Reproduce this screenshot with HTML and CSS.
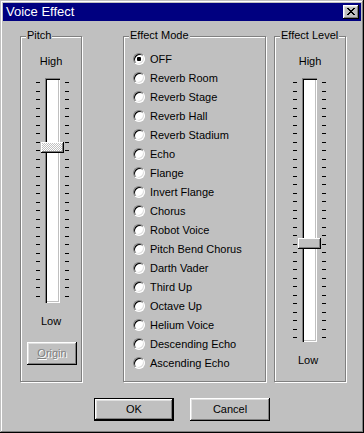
FILE: index.html
```html
<!DOCTYPE html>
<html>
<head>
<meta charset="utf-8">
<title>Voice Effect</title>
<link rel="stylesheet" href="styles.css">
</head>
<body>
<div class="window">
  <div class="titlebar">
    <span class="title">Voice Effect</span>
    <span class="close">
      <svg width="8" height="7" viewBox="0 0 8 7" shape-rendering="crispEdges">
        <rect x="0" y="0" width="2" height="1" fill="#000"/>
        <rect x="6" y="0" width="2" height="1" fill="#000"/>
        <rect x="1" y="1" width="2" height="1" fill="#000"/>
        <rect x="5" y="1" width="2" height="1" fill="#000"/>
        <rect x="2" y="2" width="4" height="1" fill="#000"/>
        <rect x="3" y="3" width="2" height="1" fill="#000"/>
        <rect x="2" y="4" width="4" height="1" fill="#000"/>
        <rect x="1" y="5" width="2" height="1" fill="#000"/>
        <rect x="5" y="5" width="2" height="1" fill="#000"/>
        <rect x="0" y="6" width="2" height="1" fill="#000"/>
        <rect x="6" y="6" width="2" height="1" fill="#000"/>
      </svg>
    </span>
  </div>
  <div class="content">
    <div class="groups">
      <div class="group pitch">
        <span class="legend">Pitch</span>
        <div class="lbl high">High</div>
        <div class="slider">
          <div class="ticks"><i></i><i></i><i></i><i></i><i></i><i></i><i></i><i></i><i></i><i></i><i></i><i></i><i></i><i></i><i></i><i></i><i></i><i></i><i></i><i></i><i></i><i></i><i></i><i></i><i></i><i></i></div>
          <div class="track"><span class="thumb dither" style="top:64px"></span></div>
          <div class="ticks"><i></i><i></i><i></i><i></i><i></i><i></i><i></i><i></i><i></i><i></i><i></i><i></i><i></i><i></i><i></i><i></i><i></i><i></i><i></i><i></i><i></i><i></i><i></i><i></i><i></i><i></i></div>
        </div>
        <div class="lbl low">Low</div>
        <button class="btn origin" disabled><u>O</u>rigin</button>
      </div>
      <div class="group mode">
        <span class="legend">Effect Mode</span>
        <ul class="radios">
          <li class="checked"><span class="radio"></span>OFF</li>
          <li><span class="radio"></span>Reverb Room</li>
          <li><span class="radio"></span>Reverb Stage</li>
          <li><span class="radio"></span>Reverb Hall</li>
          <li><span class="radio"></span>Reverb Stadium</li>
          <li><span class="radio"></span>Echo</li>
          <li><span class="radio"></span>Flange</li>
          <li><span class="radio"></span>Invert Flange</li>
          <li><span class="radio"></span>Chorus</li>
          <li><span class="radio"></span>Robot Voice</li>
          <li><span class="radio"></span>Pitch Bend Chorus</li>
          <li><span class="radio"></span>Darth Vader</li>
          <li><span class="radio"></span>Third Up</li>
          <li><span class="radio"></span>Octave Up</li>
          <li><span class="radio"></span>Helium Voice</li>
          <li><span class="radio"></span>Descending Echo</li>
          <li><span class="radio"></span>Ascending Echo</li>
        </ul>
      </div>
      <div class="group level">
        <span class="legend">Effect Level</span>
        <div class="lbl high">High</div>
        <div class="slider">
          <div class="ticks"><i></i><i></i><i></i><i></i><i></i><i></i><i></i><i></i><i></i><i></i><i></i><i></i><i></i><i></i><i></i><i></i><i></i><i></i><i></i><i></i><i></i><i></i><i></i><i></i><i></i><i></i><i></i><i></i><i></i><i></i><i></i></div>
          <div class="track"><span class="thumb" style="top:160px"></span></div>
          <div class="ticks"><i></i><i></i><i></i><i></i><i></i><i></i><i></i><i></i><i></i><i></i><i></i><i></i><i></i><i></i><i></i><i></i><i></i><i></i><i></i><i></i><i></i><i></i><i></i><i></i><i></i><i></i><i></i><i></i><i></i><i></i><i></i></div>
        </div>
        <div class="lbl low">Low</div>
      </div>
    </div>
    <div class="buttons">
      <button class="btn default">OK</button>
      <button class="btn">Cancel</button>
    </div>
  </div>
</div>
</body>
</html>
```
FILE: styles.css
```css
* { box-sizing: border-box; }
html, body { margin: 0; padding: 0; background: #c0c0c0; }
body {
  font-family: "Liberation Sans", Arial, sans-serif;
  font-size: 11px;
  line-height: 13px;
  color: #000;
}
.window {
  width: 364px;
  height: 433px;
  padding: 3px;
  background: #c0c0c0;
  box-shadow: inset -1px -1px #000, inset 1px 1px #c0c0c0, inset -2px -2px #808080, inset 2px 2px #fff;
  display: flex;
  flex-direction: column;
}
.titlebar {
  height: 18px;
  background: #000080;
  color: #fff;
  display: flex;
  align-items: center;
  justify-content: space-between;
  padding: 0 2px 0 3px;
}
.title {
  font-size: 13px;
  line-height: 18px;
}
.close {
  width: 16px;
  height: 14px;
  background: #c0c0c0;
  box-shadow: inset -1px -1px #000, inset 1px 1px #fff, inset -2px -2px #808080, inset 2px 2px #dfdfdf;
  display: flex;
  padding: 3px 0 0 4px;
}
.close svg { display: block; }
.content {
  flex: 1;
  display: flex;
  flex-direction: column;
}
.groups {
  display: flex;
  margin-top: 15px;
  padding-left: 17px;
}
.group {
  position: relative;
  height: 346px;
  border: 1px solid #808080;
  box-shadow: inset 1px 1px #fff, 1px 1px #fff;
}
.legend {
  position: absolute;
  top: -8px;
  left: 5px;
  padding: 0 1px;
  background: #c0c0c0;
  white-space: nowrap;
}
.pitch { width: 62px; }
.mode { width: 143px; margin-left: 41px; }
.level { width: 72px; margin-left: 8px; }

.lbl { text-align: center; }
.high { margin-top: 18px; }
.slider {
  display: flex;
  margin-top: 10px;
}
.pitch .slider { margin-left: 15px; }
.level .slider { margin-left: 18px; }
.ticks {
  width: 4px;
  margin-top: 4px;
  display: flex;
  flex-direction: column;
  justify-content: space-between;
}
.ticks i {
  display: block;
  width: 4px;
  height: 1px;
  background: #000;
}
.track {
  position: relative;
  width: 15px;
  margin: 0 5px;
  background: #fff;
  box-shadow: inset 1px 1px #808080, inset 2px 2px #000, inset -1px -1px #fff, inset -2px -2px #c0c0c0;
}
.pitch .track { height: 225px; }
.pitch .ticks { height: 215px; }
.level .track { height: 264px; }
.level .ticks { height: 256px; }
.thumb {
  position: absolute;
  left: -4px;
  width: 23px;
  height: 11px;
  background: #c0c0c0;
  box-shadow: inset -1px -1px #000, inset 1px 1px #fff, inset -2px -2px #808080;
}
.thumb.dither {
  background: repeating-conic-gradient(#fff 0 25%, #c0c0c0 0 50%) 0 0 / 2px 2px;
}
.low { margin-top: 12px; }
.level .low { margin-right: 4px; }

.btn {
  font: inherit;
  font-size: 11px;
  color: #000;
  background: #c0c0c0;
  border: 0;
  padding: 0;
  width: 80px;
  height: 23px;
  box-shadow: inset -1px -1px #000, inset 1px 1px #fff, inset -2px -2px #808080, inset 2px 2px #dfdfdf;
}
.btn.default {
  box-shadow: inset 0 0 0 1px #000, inset -2px -2px #000, inset 2px 2px #fff, inset -3px -3px #808080, inset 3px 3px #dfdfdf;
}
.btn.origin {
  width: 50px;
  margin: 14px 0 0 6px;
  color: #808080;
  text-shadow: 1px 1px #fff;
}
.btn.origin u { text-decoration: underline; }

.radios {
  list-style: none;
  margin: 0;
  padding: 13px 0 0 9px;
}
.radios li {
  display: flex;
  height: 19px;
  line-height: 19px;
  white-space: nowrap;
}
.radio {
  position: relative;
  flex: none;
  width: 12px;
  height: 12px;
  margin: 3px 5px 0 0;
  border-radius: 50%;
  background: #fff;
  border: 1px solid;
  border-color: #808080 #fff #fff #808080;
  box-shadow: inset 1px 1px #000, inset -1px -1px #dfdfdf;
}
.checked .radio::after {
  content: "";
  position: absolute;
  left: 3px;
  top: 3px;
  width: 4px;
  height: 4px;
  border-radius: 1px;
  background: #000;
}
.buttons {
  display: flex;
  justify-content: center;
  gap: 16px;
  margin-top: 16px;
}
```
